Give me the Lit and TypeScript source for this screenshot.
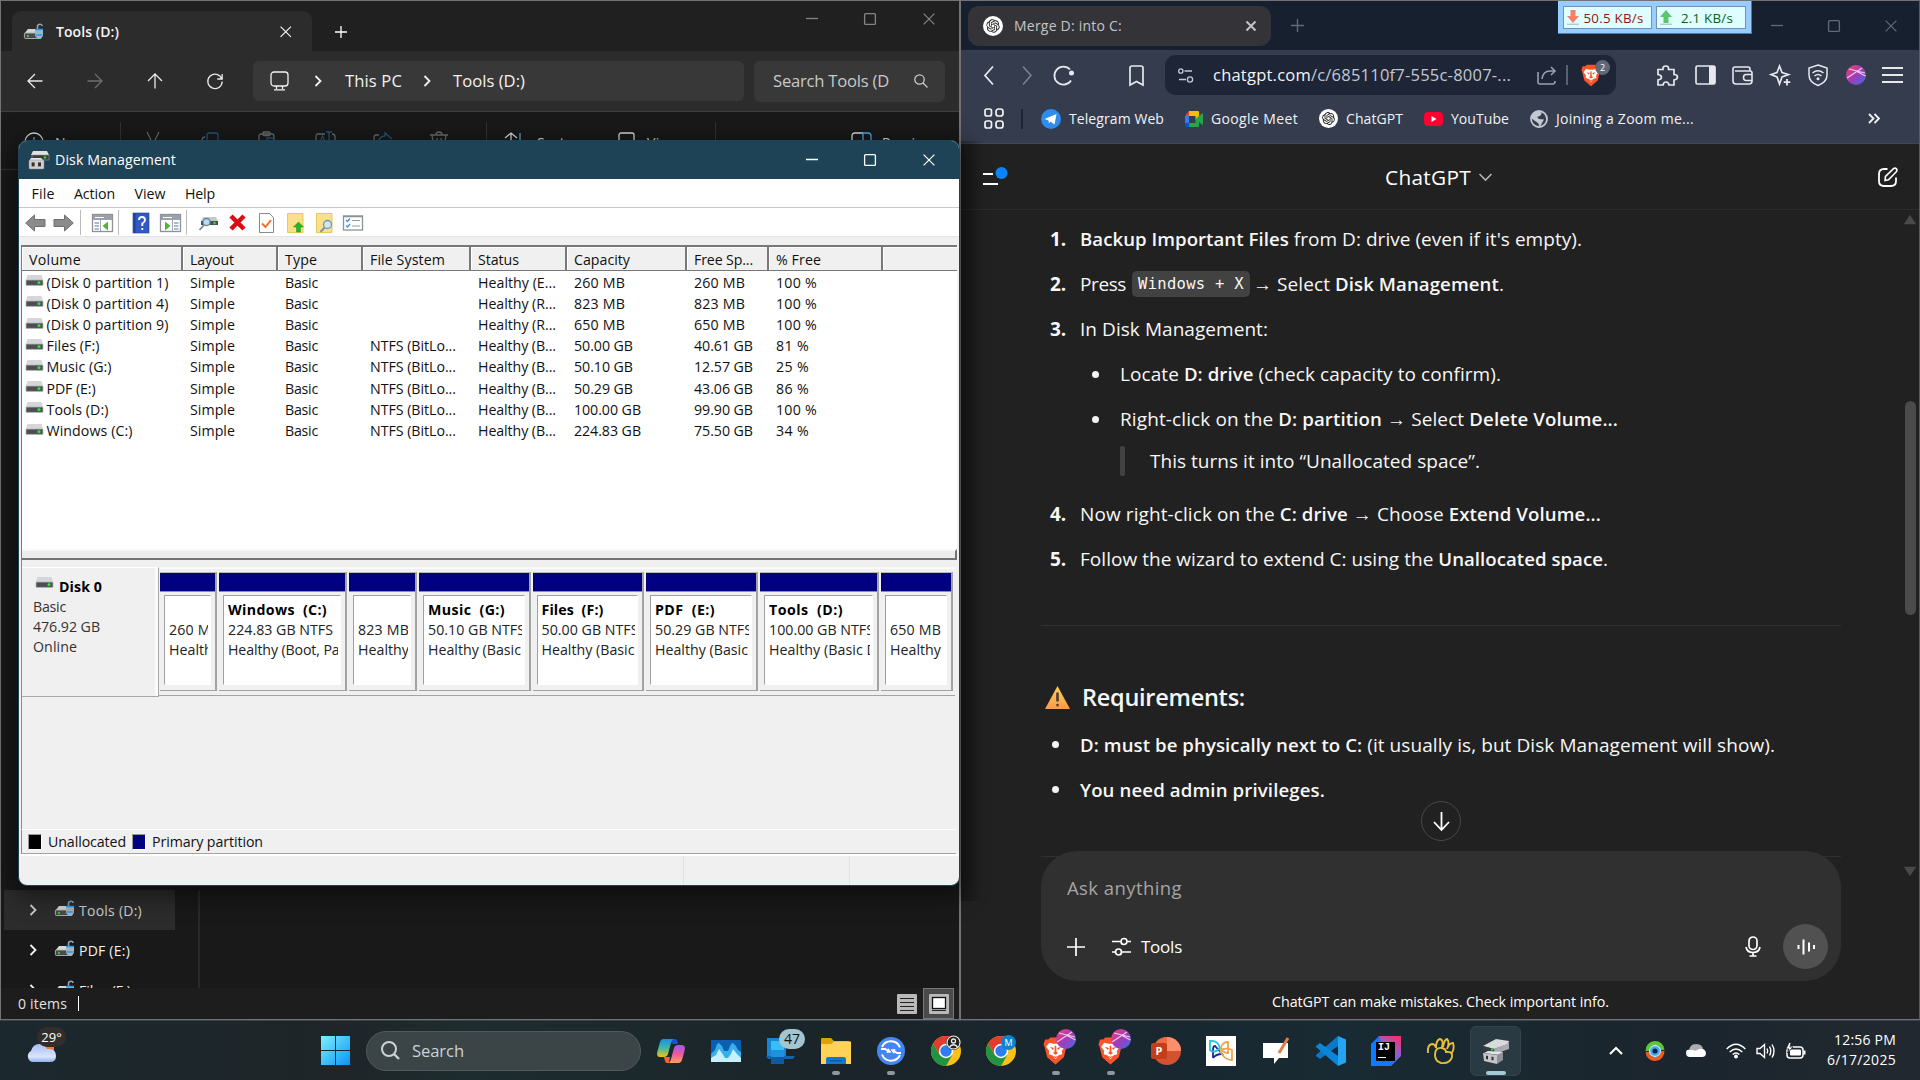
import { LitElement, html, css, svg } from "lit";
import { customElement, property } from "lit/decorators.js";

/* Text run tracked to an exact advance width. */
@customElement("ui-fit")
class UiFit extends LitElement {
  @property({ type: Number }) w = 0;
  static styles = css`:host { display: inline-block; white-space: pre; flex: none; width: max-content; }`;
  render() { return html`<slot></slot>`; }
  updated() {
    this.style.letterSpacing = "0px";
    const n = (this.textContent || "").length;
    const d = (this.w - this.getBoundingClientRect().width) / n;
    this.style.letterSpacing = d.toFixed(3) + "px";
  }
}

const ic = (w: number, h: number, body: unknown, vb = `0 0 ${w} ${h}`) =>
  html`<svg class="ic" width=${w} height=${h} viewBox=${vb} fill="none" stroke="currentColor" stroke-width="1.3">${body}</svg>`;
const t = (w: number, s: unknown) => html`<ui-fit w=${w}>${s}</ui-fit>`;
/* Centred cell of a given width; empty cells act as spacers. */
const cell = (w: number, x: unknown = "") => html`<div class="c" style="width:${w}px">${x}</div>`;

const cross = (s: number, sw = 1.2) => ic(s, s, svg`<path stroke-width=${sw} d="M.6.6 11.4 11.4M11.4.6.6 11.4"/>`, "0 0 12 12");
const plus = (s: number, sw = 1.3) => ic(s, s, svg`<path stroke-width=${sw} d="M6 0V12M0 6H12"/>`, "0 0 12 12");
const winBtns = () => html`<div class="btns">
  <div class="wb">${ic(12, 12, svg`<path d="M0 5.5H12"/>`)}</div>
  <div class="wb">${ic(12, 12, svg`<rect x=".6" y=".6" width="10.8" height="10.8" rx="1"/>`)}</div>
  <div class="wb">${cross(12)}</div></div>`;
const chev = () => ic(8, 12, svg`<path stroke-width="1.8" d="M1.5 1 6.5 6 1.5 11"/>`);

const lockDrive = () => ic(20, 18, svg`
  <path fill="#d6d6d6" stroke="none" d="M4 6H17L19 11H0Z"/><rect x=".4" y="10" width="17" height="5.500" rx="1" fill="#4a4a4a" stroke="#b5b5b5" stroke-width=".9"/>
  <circle cx="4" cy="13" r="1" fill="#3be03b" stroke="none"/>
  <path stroke="#8fa3b3" stroke-width="1.6" d="M13.5 7V3.5Q13.5 1.2 16 1.2Q18 1.2 18 3"/>
  <path fill="#9fb6c8" stroke="none" d="M11 6H19V13L16 16H14L11 13Z"/><path stroke="#2b9be8" stroke-width="1.4" d="M11 6.5H19M11.5 12H18.5"/>`);
const drive = (w = 17, h = 11) => ic(w, h, svg`
  <path fill="#d4d6d9" stroke="none" d="M1.500 0H15.500L17 5H0Z"/><rect x="0" y="5" width="17" height="5.4" rx=".6" fill="#4b4f52" stroke="#b5b8bb" stroke-width=".8"/>
  <path stroke="#36e636" stroke-width="1.6" d="M11.5 7.6H14.5M13 6.2V9"/>`, "0 0 17 11");
const dmIcon = () => ic(20, 20, svg`
  <path fill="#e2e2e2" stroke="none" d="M4 1H18L20 5H2Z"/><rect x="3" y="5" width="17" height="5" fill="#3c3c3c" stroke="#9a9a9a" stroke-width=".6"/>
  <circle cx="16" cy="7.4" r="1.2" fill="#38e038" stroke="none"/><path fill="#e8e8e8" stroke="none" d="M2 8H12L15 11H0Z"/>
  <rect x="0" y="10" width="15" height="9" rx="1" fill="#d0d0d0" stroke="#888" stroke-width=".5"/><rect x="2.6" y="12.4" width="3" height="4" fill="#333" stroke="none"/><rect x="9" y="12.4" width="3" height="4" fill="#333" stroke="none"/>`);
const dmBig = () => ic(28, 26, svg`<g stroke="none">
  <path fill="#d9dadd" d="M1 8 14 1 27 3 26 6 12 11Z"/><path fill="#a9abb0" d="M12 11 27 5V11L13 16Z"/><path fill="#3a3d40" d="M1 8 12 11V15L2 12Z"/><circle cx="10" cy="11.500" r="1.200" fill="#3ad63a"/>
  <path fill="#e4e5e8" d="M2 15 6 13 21 14 18 17Z"/><path fill="#c4c6ca" d="M1 15 15 17V26L2 23Z"/><path fill="#8f9297" d="M15 17 21 14V22L15 26Z"/>
  <path fill="#2f3133" d="M4 17.500 6 18V21.500L4 21ZM9.500 18.500 11.500 19V22.500L9.500 22Z"/></g>`);

const gpt = (s: number) => ic(s, s, svg`<circle cx="20" cy="20" r="20" fill="#fff" stroke="none"/>
  <path transform="translate(6.500 6.500) scale(1.125)" fill="#161616" stroke="none" d="M22.2819 9.8211a5.9847 5.9847 0 0 0-.5157-4.9108 6.0462 6.0462 0 0 0-6.5098-2.9A6.0651 6.0651 0 0 0 4.9807 4.1818a5.9847 5.9847 0 0 0-3.9977 2.9 6.0462 6.0462 0 0 0 .7427 7.0966 5.98 5.98 0 0 0 .511 4.9107 6.051 6.051 0 0 0 6.5146 2.9001A5.9847 5.9847 0 0 0 13.2599 24a6.0557 6.0557 0 0 0 5.7718-4.2058 5.9894 5.9894 0 0 0 3.9977-2.9001 6.0557 6.0557 0 0 0-.7475-7.0729zm-9.022 12.6081a4.4755 4.4755 0 0 1-2.8764-1.0408l.1419-.0804 4.7783-2.7582a.7948.7948 0 0 0 .3927-.6813v-6.7369l2.02 1.1686a.071.071 0 0 1 .038.052v5.5826a4.504 4.504 0 0 1-4.4945 4.4944zm-9.6607-4.1254a4.4708 4.4708 0 0 1-.5346-3.0137l.142.0852 4.783 2.7582a.7712.7712 0 0 0 .7806 0l5.8428-3.3685v2.3324a.0804.0804 0 0 1-.0332.0615L9.74 19.9502a4.4992 4.4992 0 0 1-6.1408-1.6464zM2.3408 7.8956a4.485 4.485 0 0 1 2.3655-1.9728V11.6a.7664.7664 0 0 0 .3879.6765l5.8144 3.3543-2.0201 1.1685a.0757.0757 0 0 1-.071 0l-4.8303-2.7865A4.504 4.504 0 0 1 2.3408 7.872zm16.5963 3.8558L13.1038 8.364 15.1192 7.2a.0757.0757 0 0 1 .071 0l4.8303 2.7913a4.4944 4.4944 0 0 1-.6765 8.1042v-5.6772a.79.79 0 0 0-.407-.667zm2.0107-3.0231l-.142-.0852-4.7735-2.7818a.7759.7759 0 0 0-.7854 0L9.409 9.2297V6.8974a.0662.0662 0 0 1 .0284-.0615l4.8303-2.7866a4.4992 4.4992 0 0 1 6.6802 4.66zM8.3065 12.863l-2.02-1.1638a.0804.0804 0 0 1-.038-.0567V6.0742a4.4992 4.4992 0 0 1 7.3757-3.4537l-.142.0805L8.704 5.459a.7948.7948 0 0 0-.3927.6813zm1.0976-2.3654l2.602-1.4998 2.6069 1.4998v2.9994l-2.5974 1.4997-2.6067-1.4997Z"/>`, "0 0 40 40");
const brave = (w: number, h: number) => ic(w, h, svg`<path fill="#fb542b" stroke="none" d="M5 2 7 0H17L19 2 22 2 23.5 6.5 22.5 9 20 19 12 26 4 19 1.5 9 .5 6.5 2 2Z"/>
  <path fill="#fff" stroke="none" d="M6 5 10 6H14L18 5 21 9 18 13 18.5 16 15 17 12 21 9 17 5.500 16 6 13 3 9Z"/>
  <path fill="#fb542b" stroke="none" d="M6.500 9 10.500 10 9.500 12ZM17.500 9 13.500 10 14.500 12ZM11.300 8H12.700L13 14 14.500 15 12 16.500 9.500 15 11 14ZM9 17.500 12 18.500 15 17.500 12 20Z"/>`, "0 0 24 26");
const ball = (s: number) => ic(s, s, svg`<defs><linearGradient id="bg" x1="0" y1="0" x2="1" y2="1"><stop offset=".1" stop-color="#e8417e"/><stop offset=".5" stop-color="#a33bb8"/><stop offset="1" stop-color="#3a6df0"/></linearGradient></defs>
  <circle cx="10" cy="10" r="10" fill="url(#bg)" stroke="none"/><path stroke="#f3c9e4" stroke-width="1.100" d="M3 4 19 8M1 13 16 3M10 6 19.500 11"/>`, "0 0 20 20");
const chrome = () => ic(30, 30, svg`<circle cx="15" cy="15" r="15" fill="#fbc116" stroke="none"/>
  <path fill="#e33b2e" stroke="none" d="M2 7.500A15 15 0 0 1 28 7.500L15 8 9 19Z"/><path fill="#229342" stroke="none" d="M2 7.500A15 15 0 0 0 15 30L21.500 18.500 15 21.500 8.700 18.700Z"/>
  <circle cx="15" cy="15" r="7.200" fill="#fff" stroke="none"/><circle cx="15" cy="15" r="5.700" fill="#2f7cf0" stroke="none"/>`);

const volumes: [string, number, string, string, string, number, string, number, string][] = [
  ["(Disk 0 partition 1)", 122, "", "Healthy (E...", "260 MB", 51, "260 MB", 51, "100 %"],
  ["(Disk 0 partition 4)", 122, "", "Healthy (R...", "823 MB", 51, "823 MB", 51, "100 %"],
  ["(Disk 0 partition 9)", 122, "", "Healthy (R...", "650 MB", 51, "650 MB", 51, "100 %"],
  ["Files (F:)", 53, "n", "Healthy (B...", "50.00 GB", 59, "40.61 GB", 59, "81 %"],
  ["Music (G:)", 65, "n", "Healthy (B...", "50.10 GB", 59, "12.57 GB", 59, "25 %"],
  ["PDF (E:)", 49, "n", "Healthy (B...", "50.29 GB", 59, "43.06 GB", 59, "86 %"],
  ["Tools (D:)", 62, "n", "Healthy (B...", "100.00 GB", 67, "99.90 GB", 59, "100 %"],
  ["Windows (C:)", 86, "n", "Healthy (B...", "224.83 GB", 67, "75.50 GB", 59, "34 %"],
];
const parts: [number, string, number, string, number, string, number][] = [
  [57, "", 0, "260 MB", 51, "Healthy", 51],
  [128, "Windows  (C:)", 99, "224.83 GB NTFS", 105, "Healthy (Boot, Page", 127],
  [68, "", 0, "823 MB", 51, "Healthy", 51],
  [111.5, "Music  (G:)", 77, "50.10 GB NTFS", 97, "Healthy (Basic", 93],
  [111.5, "Files  (F:)", 62, "50.00 GB NTFS", 97, "Healthy (Basic", 93],
  [112, "PDF  (E:)", 60, "50.29 GB NTFS", 97, "Healthy (Basic", 93],
  [119, "Tools  (D:)", 74, "100.00 GB NTFS", 105, "Healthy (Basic Data", 129],
  [72, "", 0, "650 MB", 51, "Healthy", 51],
];

@customElement("app-root")
class AppRoot extends LitElement {
  static styles = css`
    :host { display: block; }
    * { box-sizing: border-box; }
    .desk { position: relative; width: 1920px; height: 1080px; overflow: hidden; display: grid; grid-template: 1020px 60px / 960px 960px;
      font: 14px/20px "Open Sans", "Noto Sans", sans-serif; color: #fff; background: #1b252c; }
    .ic { display: block; flex: none; overflow: visible; }
    .r { display: flex; align-items: center; }
    .c { display: flex; align-items: center; justify-content: center; flex: none; }
    .grow { flex: 1; }
    .btns { display: flex; }
    .wb { width: 58.500px; display: flex; justify-content: center; flex: none; }

    /* file explorer */
    .ex { background: #191919; border: 1px solid #737373; display: flex; flex-direction: column; overflow: hidden; }
    .ex-tabs { height: 50px; background: #202020; display: flex; align-items: flex-start; padding-left: 11px; flex: none; }
    .ex-tab { width: 300px; height: 40px; margin-top: 10px; background: #2c2c2c; border-radius: 9px 9px 0 0; padding: 1px 21px 0 12px; display: flex; align-items: center; font-weight: 600; color: #f5f5f5; }
    .ex-tab .ic + ui-fit { margin-left: 12px; }
    .ex-new { margin: 25px 0 0 23px; }
    .ex-btns { margin: 12px 1px 0 0; color: #858585; }
    .ex-nav { height: 61px; background: #2c2c2c; border-bottom: 1px solid #3d3d3d; display: flex; align-items: center; padding-left: 4px; flex: none; color: #e8e8e8; }
    .dim { color: #6e6e6e; }
    .addr { width: 491px; height: 40px; background: #383838; border-radius: 6px; margin-left: 8px; padding-left: 17px; font-size: 16.600px; color: #f2f2f2; }
    .find { width: 191px; height: 41px; background: #383838; border-radius: 6px; margin-left: 10px; padding-left: 19px; font-size: 16.600px; color: #c9c9c9; gap: 25px; }
    .cmd { height: 58px; border-bottom: 1px solid #333; display: flex; align-items: flex-start; padding: 20px 0 0 23px; flex: none; color: #dedede; }
    .cmd ui-fit { margin-top: 1px; }
    .cmd .tool { width: 60px; color: #6c6c6c; }
    .cmd .sep { width: 1px; height: 40px; margin-top: -10px; background: #333; }
    .cmd .lead { width: 31px; }
    .cmd .new { width: 65px; }
    .cmd .tools { display: flex; padding-left: 22px; width: 365px; flex: none; }
    .cmd .sort { width: 50px; padding-left: 18px; }
    .cmd .w82 { width: 82px; }
    .cmd .w28 { width: 28px; }
    .cmd .w68 { width: 68px; }
    .cmd .prev { width: 166px; padding-left: 136px; }
    .tree { width: 199px; border-right: 2px solid #292929; margin-top: 720px; height: 98px; overflow: hidden; flex: none; }
    .tree .row { height: 40px; margin-left: 3px; width: 171px; padding-left: 25px; color: #f2f2f2; }
    .tree .sel { background: #2c2c2c; color: #cfcfcf; }
    .tree .ic + .ic { margin: -3px 0 0 18px; }
    .tree ui-fit { margin-left: 4px; margin-top: 1px; }
    .ex-stat { height: 31px; background: #1d1d1d; display: flex; align-items: center; padding-left: 17px; margin-top: auto; color: #e2e2e2; }
    .caret { width: 1px; height: 15px; background: #fff; margin-left: 11px; }
    .vsel { width: 31px; height: 31px; background: #4a4a4a; border: 1px solid #777; margin: 0 5px 0 6px; }

    /* disk management */
    .dm { position: absolute; left: 18px; top: 140px; width: 942px; height: 746px; border: 1px solid #1e4256; border-radius: 9px; overflow: hidden; background: #f0f0f0; color: #111; display: flex; flex-direction: column; box-shadow: 0 6px 24px 4px rgba(0,0,0,.5); font-size: 14.200px; }
    .dm-title { height: 38px; background: #1e4256; color: #fff; display: flex; align-items: center; padding: 0 1px 0 10px; gap: 6px; flex: none; }
    .menu { height: 29px; background: #fff; border-bottom: 1px solid #c8c8c8; padding: 2px 0 0 12.500px; gap: 19.500px; flex: none; }
    .bar { height: 29px; background: #fff; border-bottom: 1px solid #e3e3e3; padding: 1px 0 0 4px; flex: none; }
    .bar i { width: 1px; height: 25px; background: #bbb; }
    .list { margin: 8px 2px 0 2px; height: 315px; border-left: 1px solid #7a7a7a; background: #fff; display: flex; flex-direction: column; flex: none; }
    .cols { display: grid; grid-template-columns: 161px 95px 85px 108px 96px 120px 82px 114px 1fr; align-items: center; }
    .head { height: 26px; border-top: 2px solid #787878; border-bottom: 1px solid #787878; background: #f0f0f0; margin-bottom: 1px; flex: none; }
    .head > div { height: 23px; border-right: 2px solid #787878; box-shadow: inset 1px 1px #fff; padding: 3px 0 0 7px; }
    .head > div:last-child { border-right: 0; }
    .vol { height: 21.220px; flex: none; line-height: 20px; }
    .vol > div { padding-left: 7px; display: flex; align-items: center; }
    .vol > div:first-child { padding-left: 4px; gap: 3.500px; }
    .vol .ic { margin-top: -4px; }
    .split { margin-top: auto; height: 11px; background: #ececec; border-bottom: 2px solid #737373; border-right: 2px solid #737373; border-top: 2px solid #f7f7f7; }
    .graph { margin: 0 4px 0 2px; border-left: 1px solid #8a8a8a; height: 269px; display: flex; align-items: flex-start; padding-top: 7px; flex: none; }
    .disk { width: 137px; height: 130px; border-right: 1px solid #a8a8a8; border-bottom: 1px solid #a8a8a8; border-top: 1px solid #fff; box-shadow: inset -3px 0 #fafafa; padding: 9.400px 0 0 11px; color: #333; }
    .disk .nm { font-weight: 700; color: #000; gap: 6px; padding-left: 3px; height: 20px; }
    .disk .nm .ic { margin-top: -9px; }
    .ln { display: flex; height: 20px; }
    .strip { height: 129px; flex: 1; border-bottom: 1px solid #a3a3a3; border-top: 2px solid #fafafa; padding: 3px 0 0 1px; display: flex; gap: 2px; }
    .part { height: 119px; border-right: 2px solid #a3a3a3; border-bottom: 1px solid #a3a3a3; border-top: 1px solid #b8b8b8; flex: none; }
    .band { height: 19px; background: #000080; border-bottom: 1px solid #8c8ca8; }
    .box { margin: 3px 4px 4px; height: 90px; border: 1px solid #a0a0a0; border-right-color: #fff; border-bottom-color: #fff; background: #fff; padding: 4px 2px 0 4px; color: #222; }
    .box .ln { overflow: hidden; }
    .box .b { font-weight: 700; color: #000; }
    .leg { margin: 0 3px 0 2px; border-left: 1px solid #8a8a8a; height: 25px; border-top: 1px solid #fff; border-bottom: 1px solid #a3a3a3; padding-left: 6px; gap: 6px; flex: none; }
    .sw { width: 14px; height: 16px; background: #000; border: 1px solid #999; border-right-color: #fff; border-bottom-color: #fff; }
    .sw.p { background: #000080; }
    .dm-stat { flex: 1; border-top: 2px solid #fff; display: flex; padding-left: 664px; }
    .dm-stat i { width: 166px; border-left: 1px solid #e2e2e2; flex: none; }

    /* browser */
    .br { background: #212121; border: 1px solid #737373; border-right-color: #5b5b5b; display: flex; flex-direction: column; position: relative; overflow: hidden; }
    .tabs { height: 49px; background: #17202f; display: flex; align-items: center; padding-left: 7px; flex: none; color: #626a76; }
    .tab { width: 303px; height: 40px; background: #343438; border-radius: 11px; padding: 0 15px; color: #c4c4c6; gap: 11px; }
    .tabs .wb { width: 57px; }
    .tbar { height: 50px; background: #343c4d; display: flex; align-items: center; flex: none; color: #e6e8ee; }
    .url { width: 451px; height: 40px; border-radius: 11px; background: #1d2536; padding: 0 0 0 13px; font-size: 16.500px; color: #c4c8d2; flex: none; }
    .url em { font-style: normal; color: #f4f5f8; }
    .vs { width: 2px; height: 20px; background: #5a606f; }
    .bw { position: relative; }
    .badge2 { position: absolute; right: -9px; top: -4px; width: 15px; height: 15px; border-radius: 8px; background: #636775; font-size: 9px; line-height: 15px; text-align: center; color: #fff; }
    .marks { height: 44px; background: #343c4d; border-bottom: 1px solid #414857; padding: 0 39px 6px 23px; flex: none; color: #f1f2f5; }
    .marks .m { gap: 8px; margin-right: 21px; }
    .bar2 { width: 2px; height: 20px; background: #1d2536; margin: 0 18px 0 17px; }
    .top { height: 66px; border-bottom: 1px solid #2d2d2d; display: grid; grid-template-columns: 1fr 110px 1fr; align-items: center; padding: 0 21px 0 21px; flex: none; font-size: 20.800px; }
    .top .mid { gap: 8px; }
    .top .end { justify-content: flex-end; }
    .dot { fill: #0a84ff; }
    .chat { padding: 6.500px 0 0 80px; height: 641px; flex: none; font-size: 19px; line-height: 28px; color: #f7f7f7; }
    .li { display: grid; grid-template-columns: 39px 1fr; height: 45px; align-items: center; }
    .li > .n { padding-left: 9px; font-weight: 700; }
    .li > .d { padding-left: 11px; }
    .d::before { content: ""; display: block; width: 7px; height: 7px; border-radius: 50%; background: #f3f3f3; }
    .sub { margin-left: 40px; }
    .q { height: 38px; margin: 0 0 12px 79px; gap: 25px; }
    .q::before { content: ""; width: 5px; height: 30px; background: #424242; border-radius: 2px; }
    .code { font: 15.500px/25px "DejaVu Sans Mono", monospace; background: #424242; border-radius: 5px; padding: 1px 6px 0; margin: 0 3px 0 6px; height: 26px; }
    b { font-weight: 600; font-size: .98em; }
    .hr { width: 800px; height: 1px; background: #303030; margin: 43px 0 48px; }
    .h { height: 46px; font-size: 23.500px; font-weight: 600; gap: 12px; padding: 0 0 0 4px; margin-bottom: 2.500px; }
    .h .ic { margin-top: 2px; }
    .comp { width: 800px; height: 130px; margin-left: 80px; border-radius: 36px; background: #303030; display: flex; flex-direction: column; padding: 23px 13px 12px 26px; flex: none; font-size: 18.500px; line-height: 28px; color: #a5a5a5; position: relative; z-index: 1; }
    .acts { margin-top: auto; height: 45px; color: #fff; font-size: 17px; }
    .voice { width: 45px; height: 45px; border-radius: 50%; background: #515151; margin-left: 22px; }
    .foot { height: 38px; display: flex; align-items: center; justify-content: center; padding: 4px 0 0 1px; font-size: 14.300px; }
    .fold { position: absolute; left: 80px; top: 855px; width: 800px; height: 1px; background: #303030; }
    .down { position: absolute; left: 460px; top: 800px; width: 40px; height: 40px; border-radius: 50%; border: 1px solid #484848; background: #212121; }
    .sb { position: absolute; right: 3px; top: 214px; width: 12px; height: 662px; display: flex; flex-direction: column; justify-content: space-between; align-items: center; color: #4a4a4a; padding-bottom: 1px; }
    .thumb { width: 11px; height: 214px; border-radius: 6px; background: #4b4b4b; margin-bottom: 75px; }
    .shade { position: absolute; left: 0; top: 140px; width: 22px; height: 760px; background: linear-gradient(90deg, rgba(0,0,0,.3), transparent); }
    .net { position: absolute; left: 1558px; top: 1px; width: 194px; height: 33px; background: #99ccff; border-bottom: 1px solid #4d7aa6; border-right: 1px solid #4d7aa6; padding: 5px; display: flex; gap: 4px; font: 13.300px/20px "Open Sans", sans-serif; color: #8b1a0a; }
    .net > div { width: 90px; height: 23px; background: #dffeff; border: 1px solid #7292b4; padding: 0 8px 0 2px; justify-content: space-between; }
    .net .up { color: #0a6212; padding-right: 12px; }

    /* taskbar */
    .task { grid-column: 1 / 3; background: linear-gradient(90deg, #1b282d 0, #1f2529 18%, #1d2c2e 24%, #1a242a 45%, #182a33 70%, #1b252d 88%, #222830 100%); border-top: 1px solid #39444a; display: flex; align-items: center; }
    .wx { position: relative; width: 40px; margin-left: 26px; padding-top: 4px; }
    .wx span { position: absolute; left: 11px; top: -12px; width: 29px; height: 20px; border-radius: 10px; background: #332e2c; font-size: 13px; text-align: center; }
    .start { margin-left: 255px; }
    .srch { width: 275px; height: 40px; border-radius: 20px; background: #3b4447; border: 1px solid #525a5c; margin-left: 16px; padding-left: 14px; gap: 12px; font-size: 16.600px; color: #cdd2d3; margin-right: 2px; }
    .app { width: 55px; height: 50px; position: relative; display: flex; align-items: center; justify-content: center; flex: none; }
    .app.run::after { content: ""; position: absolute; bottom: 1px; width: 8px; height: 4px; border-radius: 2px; background: #8f989c; }
    .app.on::before { content: ""; position: absolute; inset: 0 2px; background: #293a43; border: 1px solid #34444c; border-radius: 6px; }
    .app.on::after { content: ""; position: absolute; bottom: 1px; width: 20px; height: 4px; border-radius: 2px; background: #a4c9d6; }
    .app .ic { position: relative; }
    .app .ov { position: absolute; right: 7px; top: 3px; }
    .cnt { position: absolute; left: 26px; top: 3px; width: 26px; height: 20px; border-radius: 10px; background: #a3c5cf; color: #111; text-align: center; font-size: 14px; }
    .mb { position: absolute; right: 12px; top: 9px; width: 15px; height: 15px; border-radius: 50%; background: #0a84d0; font-size: 9px; line-height: 15px; text-align: center; }
    .mb.k { background: #222; }
    .pp { position: absolute; left: 13px; top: 17px; width: 16px; height: 16px; background: #c43e1c; border-radius: 2px; font-size: 11px; line-height: 16px; font-weight: 700; text-align: center; }
    .ij { position: absolute; left: 18px; top: 16px; width: 19px; height: 19px; background: #000; font: 700 10px/12px "Liberation Mono", monospace; padding-left: 2px; }
    .ij::after { content: ""; display: block; width: 8px; height: 1px; background: #fff; margin-top: 3px; }
    .clock { display: flex; flex-direction: column; align-items: flex-end; font-size: 14px; line-height: 20px; padding: 0 24px 2px 0; width: 114px; }
  `;

  render() {
    return html`<main class="desk">${this.files()}${this.browser()}${this.disk()}${this.net()}${this.taskbar()}</main>`;
  }

  files() {
    const g = [
      svg`<path d="M4 0 10 12M16 0 10 12"/>`,
      svg`<rect x="7" y="1" width="11" height="14" rx="2" stroke="#24587a"/><path d="M5 5Q2 5 2 9"/>`,
      svg`<rect x="2" y="2" width="15" height="14" rx="2"/><rect x="6" y="0" width="7" height="3.500" rx="1"/><path stroke="#24587a" d="M10 12V6H18"/>`,
      svg`<path d="M10 2H3Q1 2 1 5V12M17 2Q20 2 20 5V12"/><path stroke="#24587a" d="M11 0H17M14 0V12M5 10 7.500 4 10 10"/>`,
      svg`<path d="M7 3H4Q2 3 2 6V14"/><path stroke="#24587a" d="M6 10Q8 4 13 4V1L20 7"/>`,
      svg`<path d="M1 3H19M7 3Q7 0 10 0T13 3M3 3 5 16M17 3 15 16M8 6V12M12 6V12"/>`,
    ];
    const row = (cls: string, w: number, s: string) => html`<div class="r row ${cls}">${chev()}${lockDrive()}${t(w, s)}</div>`;
    return html`<section class="ex">
      <div class="ex-tabs">
        <div class="ex-tab">${lockDrive()}${t(63, "Tools (D:)")}<div class="grow"></div>${cross(11.5)}</div>
        <div class="ex-new">${plus(12)}</div><div class="grow"></div>
        <div class="ex-btns">${winBtns()}</div>
      </div>
      <div class="ex-nav">
        ${cell(60, ic(16, 16, svg`<path d="M15.500 8H1M8 1 1 8 8 15"/>`))}
        <span class="dim">${cell(60, ic(16, 16, svg`<path d="M.5 8H15M8 1 15 8 8 15"/>`))}</span>
        ${cell(60, ic(16, 16, svg`<path d="M8 15.500V1M1 8 8 1 15 8"/>`))}
        ${cell(60, ic(16, 16, svg`<path d="M14.800 6A7.200 7.200 0 1 0 15.200 8.500M15.200 1V6H10.200"/>`))}
        <div class="r addr">
          ${ic(19, 20, svg`<rect x="1" y="1" width="17" height="14" rx="3"/><path d="M6.500 15V18M12.500 15V18M4 18.800H15"/>`)}
          ${cell(25)}${chev()}${cell(23)}${t(57, "This PC")}${cell(21)}${chev()}${cell(22)}${t(72, "Tools (D:)")}
        </div>
        <div class="r find">${t(116, "Search Tools (D")}${ic(14, 14, svg`<circle cx="5.500" cy="5.500" r="4.700"/><path d="M9 9 13.500 13.500"/>`)}</div>
      </div>
      <div class="cmd">
        <div class="lead">${ic(20, 20, svg`<circle cx="10" cy="10" r="9"/><path stroke="#4cb0ea" d="M10 5V15M5 10H15"/>`)}</div>
        <div class="new">${t(30, "New")}</div><div class="sep"></div>
        <div class="tools">${g.map(x => html`<div class="tool">${ic(20, 20, x)}</div>`)}</div><div class="sep"></div>
        <div class="sort">${ic(16, 18, svg`<path d="M0 6 6 1 12 6M6 1V16"/><path stroke="#4cb0ea" d="M15 1V16"/>`)}</div>
        <div class="w82">${t(28, "Sort")}</div>
        <div class="w28">${ic(16, 18, svg`<rect x="0" y="1" width="15" height="12" rx="2"/>`)}</div>
        <div class="w68">${t(32, "View")}</div><div class="sep"></div>
        <div class="prev">${ic(19, 18, svg`<path d="M11 1H3Q0 1 0 4V12H11"/><path stroke="#4cb0ea" d="M11 1H16Q19 1 19 4V12H11Z"/>`)}</div>
        ${t(52, "Preview")}
      </div>
      <div class="tree">
        ${row("sel", 63, "Tools (D:)")}${row("", 51, "PDF (E:)")}${row("", 52, "Files (F:)")}
      </div>
      <div class="ex-stat">${t(49, "0 items")}<i class="caret"></i><div class="grow"></div>
        ${ic(20, 20, svg`<rect width="20" height="20" rx="1" fill="#b9b9b9" stroke="none"/><path stroke="#222" stroke-width="1" d="M3 4.500H17M3 8.500H17M3 12.500H17M3 16.500H17"/>`)}
        <div class="c vsel">${ic(20, 20, svg`<rect width="20" height="20" rx="1" fill="#b9b9b9" stroke="none"/><rect x="3.500" y="3.500" width="13" height="11" fill="#fff" stroke="#111"/><path stroke="#222" stroke-width="1" d="M3 16.500H17"/>`)}</div>
      </div>
    </section>`;
  }

  disk() {
    const heads: [string, number][] = [["Volume", 52], ["Layout", 44], ["Type", 32], ["File System", 75], ["Status", 41], ["Capacity", 56], ["Free Sp...", 59], ["% Free", 45]];
    const panel = (left: boolean) => ic(21, 18, svg`<rect x=".5" y=".5" width="20" height="17" fill="#fff" stroke="#8d9299"/><rect x="1" y="1" width="19" height="5" fill="#9aa1aa" stroke="none"/>
      <path stroke="#fff" stroke-width="1" d="M3 3.500H12"/>
      ${left ? svg`<path stroke="#4b7ab5" stroke-width="1.200" d="M2.500 9H7M2.500 12H7M2.500 15H7"/><path fill="#4fb53a" stroke="none" d="M16 7.500V16.500L10.500 12Z"/><path stroke="#8d9299" stroke-width=".8" d="M8.500 6V17"/>`
        : svg`<path stroke="#4b7ab5" stroke-width="1.200" d="M14 9H18.500M14 12H18.500M14 15H18.500"/><path fill="#4fb53a" stroke="none" d="M5 7.500V16.500L10.500 12Z"/><path stroke="#8d9299" stroke-width=".8" d="M12.500 6V17"/>`}`);
    const folder = (x: unknown) => ic(18, 20, svg`<path fill="#fbe08a" stroke="#e3bd4a" stroke-width=".8" d="M.5.5H16V19.500H.5Z"/>${x}`);
    const arrow = (flip: boolean) => ic(21, 18, svg`<path transform=${flip ? "matrix(-1 0 0 1 21 0)" : "translate(0 0)"} fill="#8b8b8b" stroke="#6f6f6f" stroke-width="1" d="M.7 9 9.500 1V5.500H20V12.500H9.500V17Z"/>`);
    return html`<section class="dm">
      <div class="dm-title">${dmIcon()}${t(121, "Disk Management")}<div class="grow"></div>${winBtns()}</div>
      <div class="r menu">${t(23, "File")}${t(41, "Action")}${t(31, "View")}${t(30, "Help")}</div>
      <div class="r bar">
        ${cell(24, arrow(false))}${cell(33, arrow(true))}<i></i>
        ${cell(5)}${cell(32, panel(true))}<i></i>
        ${cell(43, ic(16, 20, svg`<rect width="16" height="20" fill="#3159c4" stroke="#1d3f99" stroke-width=".6"/><path stroke="#20409a" stroke-width="2" d="M1.500 0V20"/><path stroke="#fff" stroke-width="1.900" d="M6 7Q6 4 9 4T12 7Q12 9 9.300 10.500V13M9.300 15V17"/>`))}
        ${cell(16, panel(false))}${cell(8)}<i></i>
        ${cell(42, ic(19, 17, svg`<path fill="#c6c9cc" stroke="none" d="M4 3H17L19 7H2Z"/><rect x="2" y="7" width="17" height="4" fill="#4b4f52" stroke="none"/><circle cx="15.500" cy="9" r="1.300" fill="#36d836" stroke="none"/><circle cx="7.500" cy="8" r="3.500" fill="#b9dcf2" stroke="#71879b"/><path stroke="#71879b" stroke-width="1.800" d="M5 11 .5 16"/>`))}
        ${cell(17, ic(17, 17, svg`<path stroke="#d80d14" stroke-width="4.500" d="M2 2 15 15M15 2 2 15"/>`))}
        ${cell(41, ic(15, 20, svg`<path fill="#fff" stroke="#8a8a8a" stroke-width="1" d="M.5.5H10.500L14.500 4.500V19.500H.5Z"/><path stroke="#f07030" stroke-width="2" d="M3 10.500 6.500 14 12 7"/>`))}
        ${cell(17, folder(svg`<path fill="#27b52c" stroke="#15931b" stroke-width=".5" d="M11.500 9 16.500 14H13.500V19H9.500V14H6.500Z"/>`))}
        ${cell(41, folder(svg`<circle cx="11.500" cy="11.500" r="4" fill="#cbe6f5" stroke="#7b95aa"/><path stroke="#7b95aa" stroke-width="2" d="M8.500 14.500 4.500 19"/>`))}
        ${cell(16, ic(20, 16, svg`<rect x=".5" y="1" width="19" height="14" fill="#fff" stroke="#8d9299"/><path stroke="#3b8fe0" d="M3 5 4.500 6.500 7 3.500M3 10.500 4.500 12 7 9"/><path stroke="#999" stroke-width="1" d="M9 5.500H17M9 11H17"/><path stroke="#8d9299" d="M0 1.500H20"/>`))}
      </div>
      <div class="list">
        <div class="cols head">${heads.map(([s, w]) => html`<div>${t(w, s)}</div>`)}<div></div></div>
        ${volumes.map(v => html`<div class="cols vol">
          <div>${drive()}${t(v[1], v[0])}</div><div>${t(45, "Simple")}</div><div>${t(33, "Basic")}</div>
          <div>${v[2] ? t(86, "NTFS (BitLo...") : ""}</div><div>${t(78, v[3])}</div><div>${t(v[5], v[4])}</div><div>${t(v[7], v[6])}</div>
          <div>${t(v[8].length > 4 ? 41 : 33, v[8])}</div></div>`)}
        <div class="split"></div>
      </div>
      <div class="graph">
        <div class="disk"><div class="r nm">${drive(17, 11)}${t(43, "Disk 0")}</div>
          <div class="ln">${t(33, "Basic")}</div><div class="ln">${t(67, "476.92 GB")}</div><div class="ln">${t(44, "Online")}</div></div>
        <div class="strip">${parts.map(p => html`<div class="part" style="width:${p[0]}px"><div class="band"></div>
          <div class="box"><div class="ln b">${p[1] ? t(p[2], p[1]) : ""}</div><div class="ln">${t(p[4], p[3])}</div><div class="ln">${t(p[6], p[5])}</div></div></div>`)}</div>
      </div>
      <div class="r leg"><span class="sw"></span>${t(78, "Unallocated")}<span class="sw p"></span>${t(111, "Primary partition")}</div>
      <div class="dm-stat"><i></i><i></i></div>
    </section>`;
  }

  browser() {
    const mk = (icon: unknown, w: number, s: string) => html`<div class="r m">${icon}${t(w, s)}</div>`;
    return html`<section class="br">
      <div class="tabs">
        <div class="r tab">${gpt(20)}${t(108, "Merge D: into C:")}<div class="grow"></div>${cross(10, 2.4)}</div>
        ${cell(52, plus(13))}<div class="grow"></div>${winBtns()}
      </div>
      <div class="tbar">
        ${cell(55, ic(10, 19, svg`<path stroke-width="1.800" d="M9 .5 1 9.500 9 18.500"/>`))}
        ${cell(22, ic(10, 19, svg`<path stroke="#7d8494" stroke-width="1.500" d="M1 .5 9 9.500 1 18.500"/>`))}
        ${cell(50, ic(21, 20, svg`<path stroke-width="1.800" d="M18 15.500A9 9 0 1 1 17 4.500"/><circle cx="18.500" cy="8" r="2.500" fill="currentColor" stroke="none"/>`))}
        ${cell(41)}${ic(15, 21, svg`<path stroke-width="1.700" d="M1 3Q1 1 3 1H12Q14 1 14 3V20L7.500 16.500 1 20Z"/>`)}${cell(21)}
        <div class="r url">${ic(15, 15, svg`<circle cx="2.800" cy="3" r="2.200"/><circle cx="12" cy="11.500" r="2.600"/><path stroke-width="1.600" d="M6.500 3H14M1 11.500H8"/>`)}
          ${cell(20)}${t(298, html`<em>chatgpt.com</em>/c/685110f7-555c-8007-...`)}${cell(26)}
          ${ic(19, 19, svg`<path stroke="#9ba0ad" stroke-width="1.600" d="M1 6V16Q1 18 3 18H16Q18 18 18 15M5 13Q6 5 13 5H18M14 1 18 5 14 9"/>`)}
          ${cell(10)}<i class="vs"></i>${cell(13)}<div class="bw">${brave(20, 23)}<span class="badge2">2</span></div>
        </div>
        ${cell(33)}
        ${cell(37.5, ic(21, 21, svg`<path stroke-width="1.700" d="M1 4.500H6Q5.500 1 8.800 1T11.500 4.500H17V9.500Q20.500 9.500 20.500 12T17 15V20H12Q11.500 17 9 17T6 20H1V15Q4.500 14.500 4.500 12.300T1 9.500Z"/>`))}
        ${cell(37.5, ic(21, 20, svg`<rect x="1" y="1" width="19" height="18" rx="1.500" stroke-width="1.700"/><rect x="14" y="1" width="6" height="18" fill="currentColor" stroke="none"/>`))}
        ${cell(37.5, ic(21, 19, svg`<path stroke-width="1.600" d="M18 5V3Q18 1 16 1H3Q1 1 1 3V15Q1 18 4 18H17Q20 18 20 15V7Q20 5 18 5H3M20 8.500H14Q11.500 8.500 11.500 11.500T14 14.500H20"/>`))}
        ${cell(37.5, ic(21, 21, svg`<path stroke-width="1.700" d="M9.500 1 12 7.500 18.500 9.500 12 12 9.500 19 7 12 1 9.500 7 7.500Z"/><path stroke-width="1.800" d="M17 14V20.500M13.700 17.200H20.300"/>`))}
        ${cell(38, ic(20, 22, svg`<path stroke-width="1.500" d="M10 1 19 4V11Q19 18 10 21.500Q1 18 1 11V4Z"/><path stroke-width="1.500" d="M4.500 9Q10 4.500 15.500 9M6.500 12Q10 9 13.500 12"/><circle cx="10" cy="14.700" r="1.500" fill="currentColor" stroke="none"/>`))}
        ${cell(37, ball(20))}
        ${cell(37, ic(21, 16, svg`<path stroke-width="1.800" d="M0 1H21M0 8H21M0 15H21"/>`))}
      </div>
      <div class="r marks">
        ${ic(20, 21, svg`<g stroke-width="1.700"><rect x="1" y="1" width="6.500" height="7" rx="2"/><rect x="12" y="1" width="7" height="7" rx="2.500"/><rect x="1" y="13" width="6.500" height="7" rx="2"/><rect x="12" y="13" width="7" height="7" rx="2.500"/></g>`)}
        <div class="bar2"></div>
        ${mk(ic(20, 20, svg`<circle cx="10" cy="10" r="10" fill="#2f8cec" stroke="none"/><path fill="#fff" stroke="none" d="M3.500 10 15.500 5 13.500 15.500 9.500 12.500 8 14.500 7.500 11.500Z"/>`), 95, "Telegram Web")}
        ${mk(ic(18, 16, svg`<g stroke="none"><path fill="#fbbc04" d="M4 0H13Q14 0 14 1V7L10.500 9V5H4Z"/><path fill="#ea4335" d="M4 0V5H0Z"/><path fill="#2d7ff9" d="M0 5H4V12H0Z"/><path fill="#0a52cc" d="M0 12H4V16H1Q0 16 0 15Z"/><path fill="#2aa24a" d="M4 12H10.500V8L17 2.500Q18 2 18 3V13Q18 14 17 13.500L14 11V15Q14 16 13 16H4Z"/></g>`), 87, "Google Meet")}
        ${mk(gpt(19), 57, "ChatGPT")}
        ${mk(ic(19, 14, svg`<rect width="19" height="14" rx="4" fill="#ff0033" stroke="none"/><path fill="#fff" stroke="none" d="M7.500 4V10L12.500 7Z"/>`), 58, "YouTube")}
        ${mk(ic(18, 18, svg`<circle cx="9" cy="9" r="8" fill="none" stroke="#c3c8d1" stroke-width="1.800"/><path fill="#c3c8d1" stroke="none" d="M2 4 8 1 12 3 10 6 7 7 9 9 14 9.500 12 13 10 17 8 13 5 11 1 8Z"/>`), 138, "Joining a Zoom me...")}
        <div class="grow"></div>${ic(12, 11, svg`<path stroke-width="1.800" d="M1 1 5.500 5.500 1 10M6.500 1 11 5.500 6.500 10"/>`)}
      </div>
      <div class="top">
        ${ic(25, 22, svg`<path stroke="#fff" stroke-width="2" d="M1 8H11M1 18H16"/><circle class="dot" cx="19.500" cy="7" r="6" stroke="none"/>`)}
        <div class="r mid">${t(86, "ChatGPT")}${ic(13, 8, svg`<path stroke="#b4b4b4" stroke-width="1.600" d="M.5 1 6.500 7 12.500 1"/>`)}</div>
        <div class="r end">${ic(20, 20, svg`<path stroke-width="1.800" d="M9.500 2H6Q1 2 1 7V14Q1 19 6 19H13Q18 19 18 14V10.500"/><path stroke-width="1.600" d="M7 13.500 7.500 9.500 15.500 1.700Q17 .5 18.300 1.700T18.300 4.700L10.500 12.700Z"/>`)}</div>
      </div>
      <div class="chat">
        <div class="li"><span class="n">1.</span>${t(502, html`<b>Backup Important Files</b> from D: drive (even if it's empty).`)}</div>
        <div class="li"><span class="n">2.</span><div class="r">${t(46, "Press")}<span class="code">${t(106, "Windows + X")}</span>${t(251, html`→ Select <b>Disk Management</b>.`)}</div></div>
        <div class="li"><span class="n">3.</span>${t(188, "In Disk Management:")}</div>
        <div class="li sub"><span class="d"></span>${t(381, html`Locate <b>D: drive</b> (check capacity to confirm).`)}</div>
        <div class="li sub"><span class="d"></span>${t(498, html`Right-click on the <b>D: partition</b> → Select <b>Delete Volume...</b>`)}</div>
        <div class="r q">${t(330, "This turns it into “Unallocated space”.")}</div>
        <div class="li"><span class="n">4.</span>${t(521, html`Now right-click on the <b>C: drive</b> → Choose <b>Extend Volume...</b>`)}</div>
        <div class="li"><span class="n">5.</span>${t(528, html`Follow the wizard to extend C: using the <b>Unallocated space</b>.`)}</div>
        <div class="hr"></div>
        <div class="r h">${ic(25, 23, svg`<defs><linearGradient id="wg" x1="0" y1="0" x2="0" y2="1"><stop offset="0" stop-color="#ffcf55"/><stop offset="1" stop-color="#fb9a4b"/></linearGradient></defs><path fill="url(#wg)" stroke="none" d="M12.500 0 25 23H0Z"/><path stroke="#4a3a3a" stroke-width="2.600" stroke-linecap="round" d="M12.500 7.500V14.500M12.500 19V19.300"/>`)}${t(163, "Requirements:")}</div>
        <div class="li"><span class="d"></span>${t(695, html`<b>D: must be physically next to C:</b> (it usually is, but Disk Management will show).`)}</div>
        <div class="li"><span class="d"></span>${t(245, html`<b>You need admin privileges.</b>`)}</div>
      </div>
      <div class="fold"></div>
      <div class="comp">${t(115, "Ask anything")}
        <div class="r acts">${ic(18, 18, svg`<path stroke-width="1.700" d="M9 0V18M0 9H18"/>`)}${cell(27)}
          ${ic(19, 18, svg`<path stroke-width="1.700" d="M0 3.500H8.500M15.500 3.500H19M0 14H3M10 14H19"/><circle cx="12" cy="3.500" r="3" stroke-width="1.700"/><circle cx="6.500" cy="14" r="3" stroke-width="1.700"/>`)}
          ${cell(10)}${t(41, "Tools")}<div class="grow"></div>
          ${ic(16, 21, svg`<rect x="4" y="1" width="8" height="12.500" rx="4" stroke-width="1.700"/><path stroke-width="1.700" d="M1 11Q2 16.500 8 16.500T15 11M8 16.500V19.500M4.500 20H11.500"/>`)}
          <div class="c voice">${ic(18, 16, svg`<path stroke-width="2" d="M1.500 6V10M6.500 .5V15.500M12 3.500V12.500M17 6V10"/>`)}</div></div>
      </div>
      <div class="foot">${t(337, "ChatGPT can make mistakes. Check important info.")}</div>
      <div class="c down">${ic(17, 19, svg`<path stroke-width="1.800" d="M8.500 0V18M1 10 8.500 18 16 10"/>`)}</div>
      <div class="sb">${ic(12, 10, svg`<path fill="currentColor" d="M6 1 11 8.500H1Z"/>`)}<div class="thumb"></div>${ic(12, 10, svg`<path fill="currentColor" d="M6 9 11 1.500H1Z"/>`)}</div>
      <div class="shade"></div>
    </section>`;
  }

  net() {
    const a = (c: string, up: boolean) => ic(14, 15, svg`<path fill=${c} stroke="none" d=${up ? "M7 0 13 7H9.500V13H4.500V7H1Z" : "M7 13 13 6H9.500V0H4.500V6H1Z"}/><path stroke="#a9c9cc" d="M1 14.300H13"/>`);
    return html`<div class="net"><div class="r">${a("#f4826a", false)}${t(60, "50.5 KB/s")}</div><div class="r up">${a("#5cc46c", true)}${t(52, "2.1 KB/s")}</div></div>`;
  }

  taskbar() {
    const app = (x: unknown, cls = "") => html`<div class="app ${cls}">${x}</div>`;
    return html`<nav class="task">
      <div class="wx">${ic(31, 20, svg`<path fill="#f07a2a" stroke="none" d="M20 2H28V8H20Z"/><defs><linearGradient id="cl" x1="0" y1="0" x2="0" y2="1"><stop offset="0" stop-color="#a8bdf2"/><stop offset=".7" stop-color="#d9e5fb"/><stop offset="1" stop-color="#8fb0ee"/></linearGradient></defs><path fill="url(#cl)" stroke="none" d="M6 19A6 6 0 0 1 5 8Q7 1 13 1T21 6Q30 5 30 13Q30 19 24 19Z"/>`)}<span>29°</span></div>
      <div class="start">${ic(29, 29, svg`<defs><linearGradient id="wn" gradientUnits="userSpaceOnUse" x1="0" y1="0" x2="29" y2="29"><stop offset="0" stop-color="#7cf0fd"/><stop offset="1" stop-color="#0a94f5"/></linearGradient></defs><path fill="url(#wn)" stroke="none" d="M0 0H14V14H0ZM15 0H29V14H15ZM0 15H14V29H0ZM15 15H29V29H15Z"/>`)}</div>
      <div class="r srch">${ic(19, 19, svg`<circle cx="8" cy="8" r="7" stroke-width="2"/><path stroke-width="2.400" d="M13 13 18 18"/>`)}${t(52, "Search")}</div>
      ${app(ic(28, 26, svg`<defs><linearGradient id="c1" x1="0" y1="0" x2="0" y2="1"><stop offset="0" stop-color="#1b8df0"/><stop offset=".5" stop-color="#3fb8a0"/><stop offset="1" stop-color="#f2c313"/></linearGradient><linearGradient id="c2" x1="0" y1="0" x2="0" y2="1"><stop offset="0" stop-color="#9b5cf0"/><stop offset=".5" stop-color="#f0559e"/><stop offset="1" stop-color="#fca45a"/></linearGradient></defs><g stroke="none"><path fill="#1b4fd8" d="M10 1H18Q20.500 1 21 6H16Z"/><path fill="#f2653a" d="M7 19H13L12 25H10Q8 25 7 19Z"/><path fill="url(#c1)" d="M6 1H17Q15 1 14 5L11 16Q10 19 7 19H3Q-1 19 .5 13L3 4Q4 1 6 1Z"/><path fill="url(#c2)" d="M22 25H11Q13 25 14 21L17 10Q18 7 21 7H25Q29 7 27.500 13L25 22Q24 25 22 25Z"/></g>`))}
      ${app(ic(30, 22, svg`<g stroke="none"><rect width="30" height="22" rx="1" fill="#0b5fae"/><path fill="#35b0ec" d="M0 14 4 10 6 4 8 3 11 6 13 11 17 11 20 4 22 3 25 6 27 10 30 12V22H0Z"/><path fill="#c9effc" d="M0 18 5 15 8 9 11 13 14 18 17 18 20 14 22 9 26 14 30 18V22H0Z"/></g>`))}
      ${app(html`${ic(29, 26, svg`<g stroke="none"><path fill="#1b84d2" d="M1 0H20V20H1Z"/><path fill="#1266b0" d="M0 18H29L27 21H2Z"/><rect x="5" y="3" width="13" height="22" fill="#38bdf5"/><rect x="5" y="12" width="13" height="7" fill="#1b93de"/><rect x="5" y="19" width="13" height="7" fill="#0d5ba5"/></g>`)}<span class="cnt">47</span>`)}
      ${app(ic(30, 26, svg`<g stroke="none"><path fill="#e0a106" d="M0 1Q0 0 1 0H10L13 3H28V9H0Z"/><path fill="#ffd355" d="M0 6H10L13 3.500H30V26H0Z"/><path fill="#1277d4" d="M5 26V21Q5 19 7 19H23Q25 19 25 21V26Z"/><path fill="#0b5bb0" d="M9 22H21V23.500H9Z"/></g>`), "run")}
      ${app(ic(28, 28, svg`<circle cx="14" cy="14" r="14" fill="#4486f4" stroke="none"/><path stroke="#fff" stroke-width="2" d="M5 10A9.800 9.800 0 0 1 23 10.500M23 18A9.800 9.800 0 0 1 5 17.500M4 12H8L12 14.500M24 16H20L16 13.500"/><path fill="#fff" stroke="none" d="M11 11 14.500 15.500 9.500 16ZM17 17 13.500 12.500 18.500 12Z"/>`), "run")}
      ${app(html`${chrome()}<span class="mb k">${ic(15, 15, svg`<circle cx="7.500" cy="7.500" r="6.500" stroke="#eee" stroke-width="1.200"/><circle cx="7.500" cy="6" r="2" stroke="#eee"/><path stroke="#eee" d="M3.500 12Q7.500 7.500 11.500 12"/>`)}</span>`)}
      ${app(html`${chrome()}<span class="mb">M</span>`)}
      ${app(html`${brave(25, 30)}<span class="ov">${ball(20)}</span>`, "run")}
      ${app(html`${brave(25, 30)}<span class="ov">${ball(20)}</span>`, "run")}
      ${app(html`${ic(28, 28, svg`<g stroke="none"><circle cx="15" cy="14" r="14" fill="#d35230"/><path fill="#ff8f6b" d="M15 0A14 14 0 0 1 29 14H15Z"/><path fill="#ed6c47" d="M15 0A14 14 0 0 0 1 14H15Z"/></g>`)}<span class="pp">P</span>`)}
      ${app(ic(30, 30, svg`<rect width="30" height="30" fill="#fff" stroke="none"/><g stroke-width="1.800"><path stroke="#1a2a9a" d="M7 22V14Q7 10 9 10L16 18Q10 18 7 22"/><path stroke="#20c7dc" d="M4 5Q12 4 14 12Q8 18 4 14Z"/><path stroke="#f5a24b" d="M15 11Q17 6 22 6V17Q16 17 15 11M14 15Q19 11 26 14V24Q18 24 14 15"/></g>`))}
      ${app(ic(28, 28, svg`<path fill="#fff" stroke="none" d="M1 6H26V21H17L12 27 12 21H1Z"/><path stroke="#e0804a" stroke-width="3" d="M26 1 17 16"/>`))}
      ${app(ic(30, 30, svg`<g stroke="none"><path fill="#0a79c9" d="M22 0V10L4 23 0 20V19Z"/><path fill="#0a86d8" d="M22 30V20L4 7 0 10V11Z"/><path fill="#24a4f2" d="M22 0 30 3.500V26.500L22 30Z"/></g>`))}
      ${app(html`${ic(30, 30, svg`<defs><linearGradient id="jg" x1="1" y1="0" x2=".5" y2="1"><stop offset="0" stop-color="#ff2a5f"/><stop offset=".5" stop-color="#9a5cc8"/><stop offset="1" stop-color="#2a7cf5"/></linearGradient></defs><g stroke="none"><path fill="url(#jg)" d="M8 0H30V20L20 30 6 10Z"/><path fill="#0a7cff" d="M0 8 8 0 10 6V24H24L20 30H0Z"/></g>`)}<span class="ij">IJ</span>`)}
      ${app(ic(28, 28, svg`<g stroke="#e5c03c" stroke-width="1.900"><path d="M1 16Q0 8 5 7Q8 7 9 11Q9 3 13 2Q17 3 15 10"/><path d="M16 10Q17 3 20 2Q23 5 20 12Q22 6 26 6Q28 12 24 17"/><path d="M8 18Q8 10 15 11Q19 12 19 15Q26 14 25 20Q23 27 14 26Q8 24 8 18Z"/></g>`))}
      ${app(dmBig(), "on")}
      <div class="grow"></div>
      ${ic(14, 8, svg`<path stroke-width="2" d="M1 7 7 1 13 7"/>`)}
      ${cell(22)}${ic(20, 20, svg`<g><path stroke="#5cc832" stroke-width="4" d="M2.500 10A7.500 7.500 0 0 1 17.500 9"/><path stroke="#f05a22" stroke-width="4" d="M17.500 10A7.500 7.500 0 0 1 2.500 11"/><circle cx="10" cy="10" r="5.500" fill="#3fa9f5" stroke="#bfe4ff"/><circle cx="10" cy="10" r="2.500" fill="#10223a" stroke="none"/></g>`)}
      ${cell(21)}${ic(20, 13, svg`<g stroke="none"><path fill="#a9adb0" d="M3 8Q3 0 10 0T17 6L8 10Z"/><path fill="#fff" d="M4 13Q0 13 0 9T4 6Q6 5 9 7L13 5Q19 4 20 9Q20 13 16 13Z"/></g>`)}
      ${cell(20)}${ic(20, 15, svg`<g stroke-width="1.500"><path d="M.7 6Q10-3.500 19.300 6M3.700 9Q10 3 16.300 9M6.700 11.500Q10 8.500 13.300 11.500"/><circle cx="10" cy="13.500" r="1.200" fill="#fff"/></g>`)}
      ${cell(10)}${ic(20, 16, svg`<path stroke-width="1.400" d="M1 5.500H4L8.500 1.500V14.500L4 10.500H1ZM11 5.500Q12.500 8 11 10.500M13.500 3.500Q16 8 13.500 12.500M16 1.500Q20 8 16 14.500"/>`)}
      ${cell(10)}${ic(20, 16, svg`<rect x="1" y="4" width="16" height="11" rx="3" stroke-width="1.500"/><rect x="4" y="6.500" width="11" height="6" rx="1" fill="#fff" stroke="none"/><path stroke-width="2" d="M18.500 7.500V11.500"/><path fill="#fff" stroke="#1b252d" stroke-width=".8" d="M3-.5 0 6H3L1.500 10 7 4H4L5-.5Z"/>`)}
      <div class="clock">${t(62, "12:56 PM")}${t(69, "6/17/2025")}</div>
    </nav>`;
  }
}
